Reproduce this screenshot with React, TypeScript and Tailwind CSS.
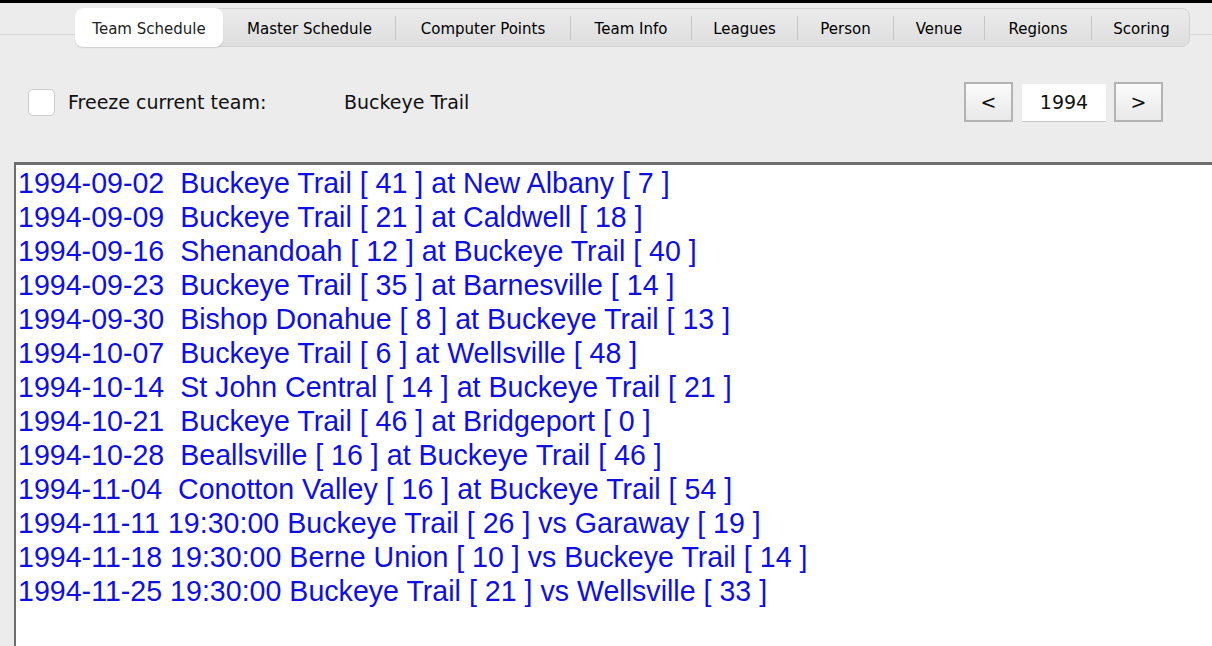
import React from 'react'

const tabs = [
  { label: 'Team Schedule', w: 'w-[148px]' },
  { label: 'Master Schedule', w: 'w-[172px]' },
  { label: 'Computer Points', w: 'w-[175px]' },
  { label: 'Team Info', w: 'w-[121px]' },
  { label: 'Leagues', w: 'w-[106px]' },
  { label: 'Person', w: 'w-[96px]' },
  { label: 'Venue', w: 'w-[91px]' },
  { label: 'Regions', w: 'w-[107px]' },
  { label: 'Scoring', w: 'w-[99px]' },
]

const games = [
  '1994-09-02  Buckeye Trail [ 41 ] at New Albany [ 7 ]',
  '1994-09-09  Buckeye Trail [ 21 ] at Caldwell [ 18 ]',
  '1994-09-16  Shenandoah [ 12 ] at Buckeye Trail [ 40 ]',
  '1994-09-23  Buckeye Trail [ 35 ] at Barnesville [ 14 ]',
  '1994-09-30  Bishop Donahue [ 8 ] at Buckeye Trail [ 13 ]',
  '1994-10-07  Buckeye Trail [ 6 ] at Wellsville [ 48 ]',
  '1994-10-14  St John Central [ 14 ] at Buckeye Trail [ 21 ]',
  '1994-10-21  Buckeye Trail [ 46 ] at Bridgeport [ 0 ]',
  '1994-10-28  Beallsville [ 16 ] at Buckeye Trail [ 46 ]',
  '1994-11-04  Conotton Valley [ 16 ] at Buckeye Trail [ 54 ]',
  '1994-11-11 19:30:00 Buckeye Trail [ 26 ] vs Garaway [ 19 ]',
  '1994-11-18 19:30:00 Berne Union [ 10 ] vs Buckeye Trail [ 14 ]',
  '1994-11-25 19:30:00 Buckeye Trail [ 21 ] vs Wellsville [ 33 ]',
]

const ui = "font-['Lucida_Grande','DejaVu_Sans',sans-serif]"

export default function App() {
  return (
    <div className={`w-[1212px] h-[646px] overflow-hidden bg-[#ececec] border-t-[3px] border-black flex flex-col ${ui} text-[#111]`}>
      {/* Tab strip */}
      <div className="relative h-[44px] shrink-0">
        {/* pane line behind the tabs */}
        <div className="absolute left-0 right-0 top-[31px] h-px bg-[#d6d6d6]" />
        <div className="relative ml-[75px] mt-[5px] flex h-[39px] w-[1115px] rounded-[8px] border border-[#d2d2d2] bg-gradient-to-b from-[#ebebeb] to-[#dedede]">
          {tabs.map((t, i) => (
            <div key={t.label} className={`flex ${t.w} shrink-0 items-center`}>
              {i === 0 ? (
                <div className="-m-px flex h-[39px] w-full items-center justify-center rounded-[8px] bg-white pt-[3px] text-[15px] text-[#222] shadow-[0_1px_1px_rgba(0,0,0,0.12)]">
                  {t.label}
                </div>
              ) : (
                <>
                  <div className="flex flex-1 items-center justify-center pt-[3px] text-[15px] text-black">{t.label}</div>
                  {i < tabs.length - 1 && <div className="h-[24px] w-px bg-[#c6c6c6]" />}
                </>
              )}
            </div>
          ))}
        </div>
      </div>

      {/* Controls row */}
      <div className="mt-[35px] flex h-[40px] shrink-0 items-center">
        <div className="ml-[28px] h-[27px] w-[27px] rounded-[5px] border border-[#cbcbcb] bg-white" />
        <div className="ml-[13px] w-[276px] text-[19px] leading-none">Freeze current team:</div>
        <div className="text-[19px] leading-none">Buckeye Trail</div>
        <div className="ml-auto mr-[49px] flex items-center">
          <button className="flex h-[40px] w-[49px] items-center justify-center border-2 border-[#b3b3b3] bg-gradient-to-b from-[#fbfbfb] to-[#e9e9e9] text-[19px] leading-none">
            &lt;
          </button>
          <div className="ml-[9px] flex h-[37px] w-[84px] items-center justify-center bg-white text-[19px] leading-none shadow-[0_1px_0_#c4c4c4]">
            1994
          </div>
          <button className="ml-[8px] flex h-[40px] w-[49px] items-center justify-center border-2 border-[#b3b3b3] bg-gradient-to-b from-[#fbfbfb] to-[#e9e9e9] text-[19px] leading-none">
            &gt;
          </button>
        </div>
      </div>

      {/* Schedule list */}
      <div className="mt-[40px] ml-[14px] flex-1 border-l-2 border-t-[3px] border-[#6e6e6e] bg-white pl-[2px] pt-px font-['Liberation_Sans',Arial,sans-serif] text-[28.6px] leading-[34px] text-[#0f0fe2]">
        {games.map((g) => (
          <div key={g} className="whitespace-pre">{g}</div>
        ))}
      </div>
    </div>
  )
}
